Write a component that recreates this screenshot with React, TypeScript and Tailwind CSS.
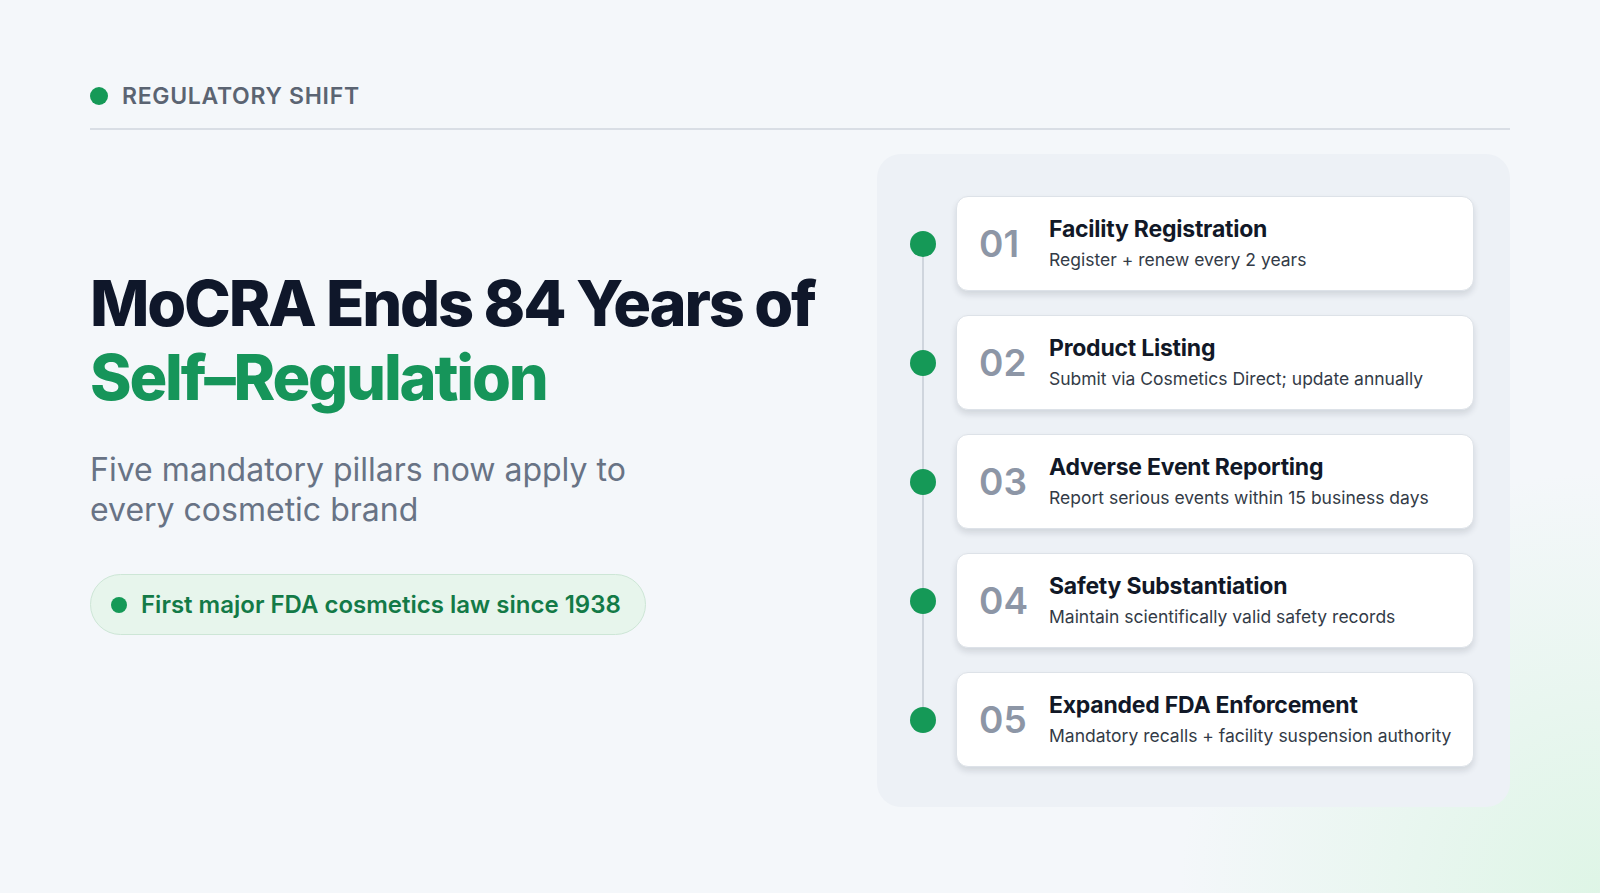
import React from "react";

const items = [
  ["01", "Facility Registration", "Register + renew every 2 years"],
  ["02", "Product Listing", "Submit via Cosmetics Direct; update annually"],
  ["03", "Adverse Event Reporting", "Report serious events within 15 business days"],
  ["04", "Safety Substantiation", "Maintain scientifically valid safety records"],
  ["05", "Expanded FDA Enforcement", "Mandatory recalls + facility suspension authority"],
];

export default function App() {
  return (
    <div
      className="w-[1600px] h-[893px] overflow-hidden bg-[#f4f7fa] px-[90px] pt-[82px]"
      style={{ fontFamily: "Inter, 'Noto Sans', sans-serif", backgroundImage: "radial-gradient(circle at 100% 100%, rgba(220,245,228,0.9) 0px, rgba(244,247,250,0) 420px)" }}
    >
      <div className="flex items-center gap-[14px] h-[28px]">
        <span className="w-[18px] h-[18px] rounded-full bg-[#159957]" />
        <span className="text-[23px] font-semibold tracking-[0.03em] text-[#5b6472]">REGULATORY SHIFT</span>
      </div>
      <div className="mt-[18px] h-[2px] bg-[#d9dee5]" />
      <div className="flex mt-[24px]">
        <div className="w-[787px] pt-[112px]">
          <h1 className="text-[63px] leading-[74px] font-extrabold tracking-[-0.035em] text-[#0f172a]">
            MoCRA Ends 84 Years of
            <br />
            <span className="text-[#16955a]">Self–Regulation</span>
          </h1>
          <p className="mt-[36px] text-[32px] leading-[40px] text-[#687385] w-[580px]">
            Five mandatory pillars now apply to every cosmetic brand
          </p>
          <div className="mt-[44px] inline-flex items-center gap-[14px] h-[61px] px-[20px] pr-[24px] rounded-full bg-[#e7f5ec] border border-[#cde6d6]">
            <span className="w-[16px] h-[16px] rounded-full bg-[#159957]" />
            <span className="text-[24px] font-semibold text-[#137a47]">First major FDA cosmetics law since 1938</span>
          </div>
        </div>
        <div className="w-[633px] h-[653px] rounded-[24px] bg-[#edf1f6] pl-[24px] pr-[36px] pt-[42px] flex">
          <div className="relative w-[44px] mr-[11px]">
            <div className="absolute left-[21px] top-[48px] bottom-[100px] w-[2px] bg-[#cfd5dd]" />
          </div>
          <div className="flex flex-col gap-[24px] flex-1">
            {items.map(([n, t, d]) => (
              <div key={n} className="relative h-[95px] rounded-[12px] bg-white border border-[#dde2e8] shadow-[0_4px_6px_rgba(15,23,42,0.12)] flex items-center">
                <span className="absolute left-[-47px] top-[34px] w-[26px] h-[26px] rounded-full bg-[#159957]" />
                <span className="w-[92px] pl-[22px] text-[37px] font-semibold text-[#8d96a6] shrink-0">{n}</span>
                <div>
                  <div className="text-[23px] font-bold text-[#111827] leading-[30px] tracking-[-0.01em]">{t}</div>
                  <div className="text-[17.5px] text-[#333b47] leading-[28px] mt-[2px] whitespace-nowrap">{d}</div>
                </div>
              </div>
            ))}
          </div>
        </div>
      </div>
    </div>
  );
}
